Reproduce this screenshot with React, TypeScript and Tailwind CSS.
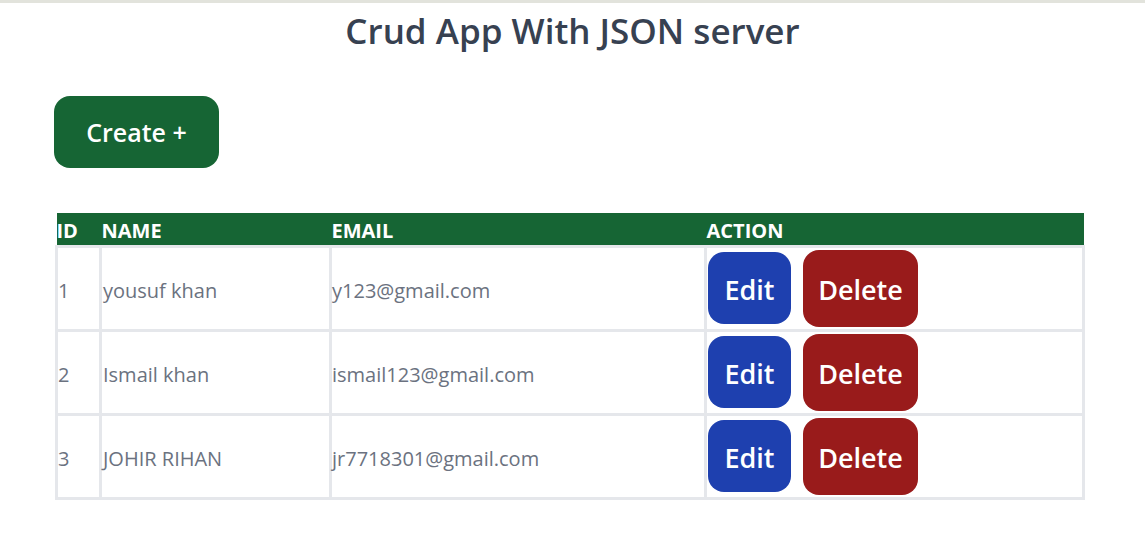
import React from 'react';

type User = { id: number; name: string; email: string };

const users: User[] = [
  { id: 1, name: 'yousuf khan', email: 'y123@gmail.com' },
  { id: 2, name: 'Ismail khan', email: 'ismail123@gmail.com' },
  { id: 3, name: 'JOHIR RIHAN', email: 'jr7718301@gmail.com' },
];

const App: React.FC = () => {
  return (
    <div
      className="min-h-[535px] bg-white border-t-[3px] border-[#e2e3dc]"
      style={{ fontFamily: '"Open Sans", "Noto Sans", sans-serif' }}
    >
      <h1 className="text-center text-[35px] font-semibold text-[#374151] leading-[44px] pt-[6px]">
        Crud App With JSON server
      </h1>

      <div className="px-[54px] mt-[43px]">
        <button className="bg-[#166534] text-white text-[25px] font-semibold rounded-2xl w-[165px] h-[72px] pt-[2px]">
          Create +
        </button>
      </div>

      <div className="px-[55px] mt-[45px]">
        <table className="w-[1030px] border-collapse text-left">
          <thead>
            <tr className="bg-[#166534] text-white text-[20px] font-bold h-[33px]">
              <th className="w-[44px] pl-0 pt-[4px] leading-none">ID</th>
              <th className="w-[230px] pl-[1px] pt-[4px] leading-none">NAME</th>
              <th className="w-[375px] pl-[1px] pt-[4px] leading-none">EMAIL</th>
              <th className="pl-[1px] pt-[4px] leading-none">ACTION</th>
            </tr>
          </thead>
          <tbody>
            {users.map((u) => (
              <tr key={u.id} className="text-[#6b7280] text-[20px]">
                <td className="border-[3px] border-[#e5e7eb] pl-0 pt-[6px]">{u.id}</td>
                <td className="border-[3px] border-[#e5e7eb] pl-[1px] pt-[6px]">{u.name}</td>
                <td className="border-[3px] border-[#e5e7eb] pl-0 pt-[6px]">{u.email}</td>
                <td className="border-[3px] border-[#e5e7eb] pl-[1px] py-[2px]">
                  <div className="flex items-center gap-[12px]">
                    <button className="bg-[#1e40af] text-white text-[27px] font-semibold rounded-2xl w-[83px] h-[72px] pt-[5px]">
                      Edit
                    </button>
                    <button className="bg-[#991b1b] text-white text-[27px] font-semibold rounded-2xl w-[115px] h-[77px] pt-[5px]">
                      Delete
                    </button>
                  </div>
                </td>
              </tr>
            ))}
          </tbody>
        </table>
      </div>
    </div>
  );
};

export default App;
